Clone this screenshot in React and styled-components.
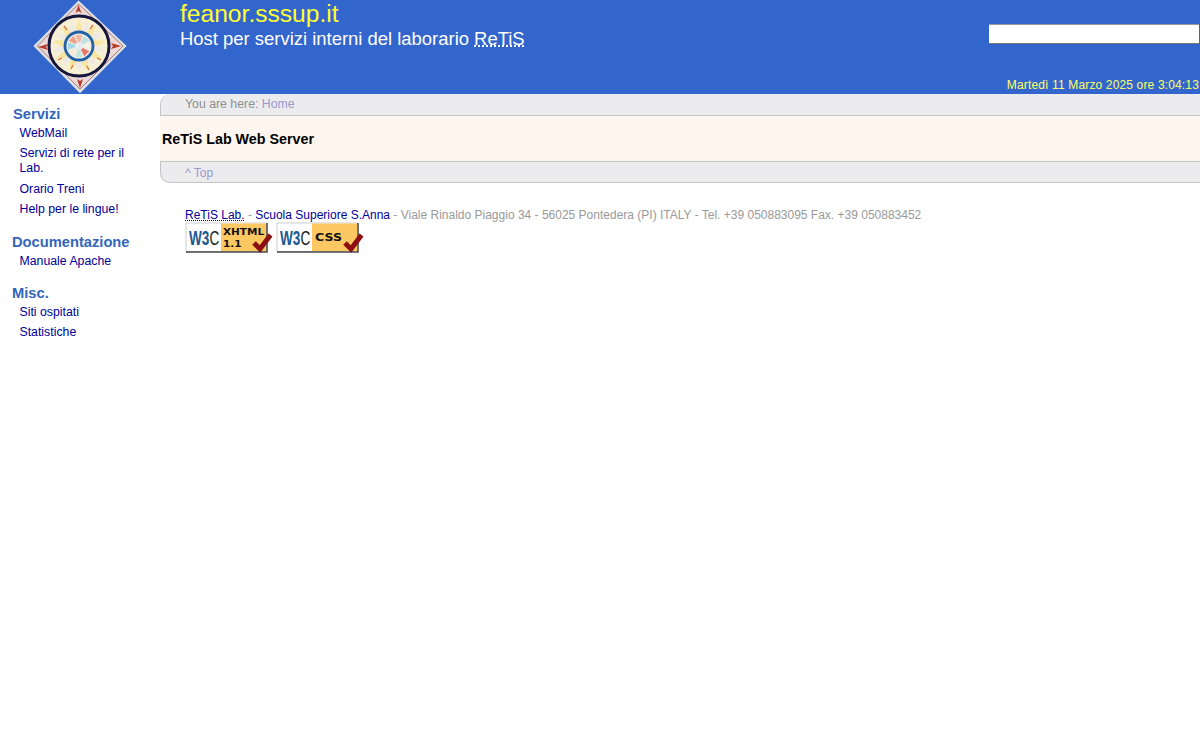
import React from 'react';
import styled, { createGlobalStyle } from 'styled-components';

const GlobalStyle = createGlobalStyle`
  html, body {
    margin: 0;
    padding: 0;
    background: #fff;
    font-family: "Liberation Sans", Arial, sans-serif;
    font-size: 12px;
  }
`;

const Header = styled.header`
  height: 94px;
  background: #3366cc;
  display: flex;
`;

const LogoCell = styled.div`
  width: 180px;
  flex: none;
  padding-left: 33px;
  box-sizing: border-box;
`;

const TitleCell = styled.div`
  flex: 1;
  color: #fff;
`;

const SiteName = styled.h1`
  margin: 0;
  font-size: 24.6px;
  line-height: 28px;
  font-weight: normal;
  color: #ffff33;
`;

const SiteSub = styled.h2`
  margin: 0;
  font-size: 18.45px;
  line-height: 21px;
  font-weight: normal;
  color: #fff;
`;

const Abbr = styled.abbr`
  text-decoration: underline dotted;
  text-underline-offset: 1px;
`;

const SideCell = styled.div`
  width: 212px;
  flex: none;
  display: flex;
  flex-direction: column;
  align-items: flex-end;
  padding-top: 24px;
  box-sizing: border-box;
`;

const SearchInput = styled.input`
  width: 210px;
  height: 20px;
  box-sizing: border-box;
  border: 0;
  border-bottom: 1px solid #777;
  border-top: 1px solid #999;
  background: #fff;
  padding: 0;
  margin: 0 1px 0 0;
`;

const DateLine = styled.div`
  margin-top: auto;
  padding: 0 1px 2px 0;
  color: #ffff66;
  font-size: 12px;
  letter-spacing: 0.15px;
  line-height: 14px;
  white-space: nowrap;
`;

const Body = styled.div`
  display: flex;
`;

const Sidebar = styled.nav`
  width: 160px;
  flex: none;
  padding-top: 12px;
  box-sizing: border-box;
`;

const MenuTitle = styled.div`
  font-size: 14.7px;
  line-height: 16px;
  font-weight: bold;
  color: #3366bb;
  padding-left: ${p => p.$indent}px;
  margin-top: ${p => p.$top || 0}px;
  margin-bottom: ${p => p.$after || 0}px;
`;

const MenuLink = styled.a`
  display: block;
  color: #000099;
  font-size: 12.3px;
  line-height: 15px;
  padding: 2.75px 20px 2.75px 19.5px;
  text-decoration: none;
`;

const Main = styled.main`
  flex: 1;
  min-width: 0;
`;

const Crumb = styled.div`
  height: 22px;
  box-sizing: border-box;
  background: #ececee;
  border: 1px solid #c4c4c4;
  border-top: 0;
  border-right: 0;
  border-radius: 10px 0 0 0;
  padding: 3px 0 0 24px;
  font-size: 12.3px;
  line-height: 15px;
  color: #8f8f8f;
`;

const Muted = styled.span`
  color: #9999cc;
`;

const Content = styled.div`
  height: 45px;
  box-sizing: border-box;
  background: #fff5ef;
  display: flex;
  align-items: center;
  padding: 1px 0 0 2px;
`;

const PageTitle = styled.h3`
  margin: 0;
  font-size: 14.3px;
  color: #000;
  font-weight: bold;
`;

const TopBar = styled.div`
  height: 22px;
  box-sizing: border-box;
  background: #ececee;
  border: 1px solid #c4c4c4;
  border-right: 0;
  border-radius: 0 0 0 10px;
  padding: 4px 0 0 24px;
  line-height: 15px;
  color: #9999cc;
`;

const Footer = styled.div`
  padding: 25px 0 0 25px;
  color: #999;
  line-height: 14px;
`;

const FooterLink = styled.a`
  color: #000099;
  text-decoration: none;
`;

const Badges = styled.div`
  display: flex;
  gap: 3px;
`;

const BadgeSvg = styled.svg`
  display: block;
  flex: none;
`;

const BadgeText = styled.text`
  font-family: "DejaVu Sans", sans-serif;
  font-weight: bold;
  font-size: ${p => p.$size}px;
  fill: #111;
`;

const LogoMark = styled.text`
  font-family: "Liberation Sans", sans-serif;
  font-size: 20px;
  font-weight: bold;
  fill: #1d5a92;

  tspan {
    font-weight: normal;
    fill: #222;
  }
`;

const petals = Array.from({ length: 18 }, (_, i) => i * 20);
const wedgeColors = ['#eeb8a0', '#b8e2e6', '#f2f2ea', '#e6786a', '#bfe8de', '#f6ecd8', '#a4d8e8', '#eea088'];

const Logo = () => (
  <svg width="94" height="94" viewBox="0 0 94 94">
    <defs>
      <filter id="soft" x="-5%" y="-5%" width="110%" height="110%">
        <feGaussianBlur stdDeviation="0.5" />
      </filter>
    </defs>
    <g filter="url(#soft)">
      <polygon points="45.5,1.5 92.5,46 47,92 1.5,46" fill="#ead9d8" stroke="#dce2e4" strokeWidth="1.6" />
      <polygon points="45.5,4 90,46 47,89 4.5,46" fill="none" stroke="#7f5a5a" strokeWidth="0.7" />
      <g fill="#b83a28">
        <path d="M45.5 5 l-3 8 l3 -2 l3 2 z" />
        <path d="M47 88 l-3 -9 l3 2 l3 -2 z" />
        <path d="M5 47 l10 -3 l-2 3 l2 3 z" />
        <path d="M88 46 l-10 -3 l2 3 l-2 3 z" />
      </g>
      <circle cx="46" cy="46" r="30" fill="#f7efd4" />
      {petals.map(a => (
        <path
          key={a}
          d="M46 19 L50 31 L42 31 Z"
          fill={a % 40 === 0 ? '#f8e6a0' : '#eee9e2'}
          transform={`rotate(${a} 46 46)`}
        />
      ))}
      <g stroke="#d8704c" strokeWidth="1.3">
        <path d="M60 25 L57 29" />
        <path d="M31 26 L34 30" />
        <path d="M25 60 L29 58" />
        <path d="M68 60 L64 58" />
        <path d="M38 69 L40 65" />
        <path d="M56 70 L54 66" />
      </g>
      <circle cx="46" cy="46" r="30" fill="none" stroke="#15153a" strokeWidth="3" />
      <circle cx="46" cy="46" r="14" fill="#f0ece0" stroke="#2461a8" strokeWidth="2.8" />
      {wedgeColors.map((c, i) => (
        <path
          key={c}
          d="M46 46 L42.5 35 L49.5 35 Z"
          fill={c}
          transform={`rotate(${i * 45} 46 46)`}
        />
      ))}
      <circle cx="46" cy="46" r="4" fill="#e8ecf0" />
    </g>
  </svg>
);

const Badge = ({ children }) => (
  <BadgeSvg width="88" height="31" viewBox="0 0 88 31">
    <rect x="1" y="1" width="81" height="28.5" fill="#fff" stroke="#aaa" strokeWidth="0.6" />
    <rect x="36" y="1.5" width="45.5" height="27.5" fill="#fdc762" />
    <path d="M1 30 H82 V1" fill="none" stroke="#4a4a4a" strokeWidth="1.5" />
    <LogoMark transform="translate(4 23) scale(0.68 1)">W3<tspan>C</tspan></LogoMark>
    {children}
    <path d="M69 21 L75 27 L85.5 13" fill="none" stroke="#8c0f12" strokeWidth="5" />
  </BadgeSvg>
);

const App = () => (
  <>
    <GlobalStyle />
    <Header>
      <LogoCell>
        <Logo />
      </LogoCell>
      <TitleCell>
        <SiteName>feanor.sssup.it</SiteName>
        <SiteSub>
          Host per servizi interni del laborario <Abbr>ReTiS</Abbr>
        </SiteSub>
      </TitleCell>
      <SideCell>
        <SearchInput type="text" />
        <DateLine>Martedì 11 Marzo 2025 ore 3:04:13</DateLine>
      </SideCell>
    </Header>
    <Body>
      <Sidebar>
        <MenuTitle $indent={13} $after={1}>Servizi</MenuTitle>
        <MenuLink>WebMail</MenuLink>
        <MenuLink>Servizi di rete per il Lab.</MenuLink>
        <MenuLink>Orario Treni</MenuLink>
        <MenuLink>Help per le lingue!</MenuLink>
        <MenuTitle $indent={12} $top={14} $after={1}>Documentazione</MenuTitle>
        <MenuLink>Manuale Apache</MenuLink>
        <MenuTitle $indent={12} $top={13.5} $after={1}>Misc.</MenuTitle>
        <MenuLink>Siti ospitati</MenuLink>
        <MenuLink>Statistiche</MenuLink>
      </Sidebar>
      <Main>
        <Crumb>
          You are here: <Muted>Home</Muted>
        </Crumb>
        <Content>
          <PageTitle>ReTiS Lab Web Server</PageTitle>
        </Content>
        <TopBar>^ Top</TopBar>
        <Footer>
          <FooterLink><Abbr>ReTiS Lab.</Abbr></FooterLink> - <FooterLink>Scuola Superiore S.Anna</FooterLink> - Viale Rinaldo Piaggio 34 - 56025 Pontedera (PI) ITALY - Tel. +39 050883095 Fax. +39 050883452
          <Badges>
            <Badge>
              <BadgeText $size={9.2} transform="translate(38 13) scale(1.14 1)">XHTML</BadgeText>
              <BadgeText $size={9.2} transform="translate(38 24.5) scale(1.14 1)">1.1</BadgeText>
            </Badge>
            <Badge>
              <BadgeText $size={10.5} transform="translate(39 19) scale(1.2 1)">CSS</BadgeText>
            </Badge>
          </Badges>
        </Footer>
      </Main>
    </Body>
  </>
);

export default App;
